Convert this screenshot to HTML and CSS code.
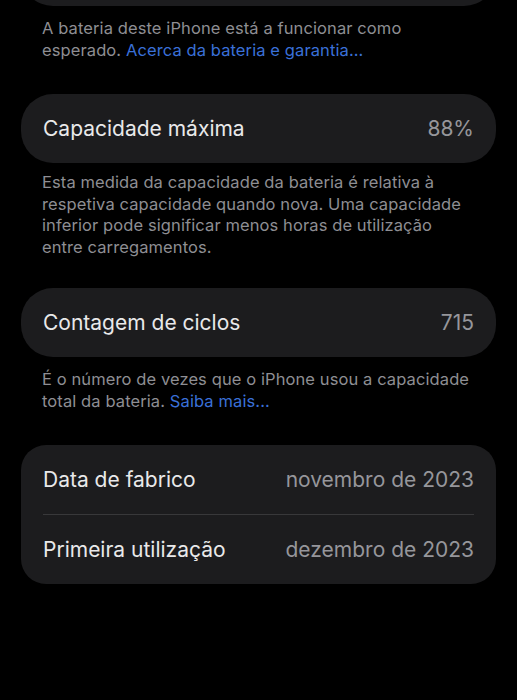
FILE: index.html
```html
<!DOCTYPE html>
<html lang="pt-PT">
<head>
  <meta charset="UTF-8">
  <meta name="viewport" content="width=device-width, initial-scale=1.0">
  <title>Estado da bateria</title>
  <link rel="stylesheet" href="styles.css">
</head>
<body>
  <main class="settings">
    <div class="group group-cut"></div>
    <p class="note note-loose">A bateria deste iPhone está a funcionar como<br>esperado. <a href="#">Acerca da bateria e garantia...</a></p>

    <div class="group group-single">
      <div class="row">
        <span class="label">Capacidade máxima</span>
        <span class="value">88%</span>
      </div>
    </div>
    <p class="note">Esta medida da capacidade da bateria é relativa à<br>respetiva capacidade quando nova. Uma capacidade<br>inferior pode significar menos horas de utilização<br>entre carregamentos.</p>

    <div class="group group-single">
      <div class="row">
        <span class="label">Contagem de ciclos</span>
        <span class="value">715</span>
      </div>
    </div>
    <p class="note note-loose">É o número de vezes que o iPhone usou a capacidade<br>total da bateria. <a href="#">Saiba mais...</a></p>

    <div class="group">
      <div class="row">
        <span class="label">Data de fabrico</span>
        <span class="value">novembro de 2023</span>
      </div>
      <div class="row">
        <span class="label">Primeira utilização</span>
        <span class="value">dezembro de 2023</span>
      </div>
    </div>
  </main>
</body>
</html>
```

FILE: styles.css
```css
body {
  margin: 0;
  padding: 0;
  background-color: #000;
  color: #ececed;
  font-family: Inter, "Liberation Sans", Arial, sans-serif;
  overflow: hidden;
}
.settings {
  display: flex;
  flex-direction: column;
  padding: 0 21px;
}
.group {
  background-color: #1c1c1e;
  border-radius: 25px;
  padding: 0 22px;
}
.group-single {
  border-radius: 32px;
}
.group-cut {
  height: 69px;
  margin-top: -63px;
  border-radius: 32px;
}
.row {
  display: flex;
  justify-content: space-between;
  align-items: center;
  height: 69px;
  font-size: 21px;
}
.row + .row {
  border-top: 1px solid #38383a;
}
.label {
  color: #e9e9ea;
}
.value {
  color: #96969b;
}
.note {
  margin: 0 0 30px;
  padding: 9px 21px 0;
  font-size: 16.5px;
  line-height: 21.5px;
  letter-spacing: 0.1px;
  color: #8e8e93;
}
.note-loose {
  margin-bottom: 33px;
  padding-top: 12px;
}
.note a {
  color: #3a70d8;
  text-decoration: none;
}
```
